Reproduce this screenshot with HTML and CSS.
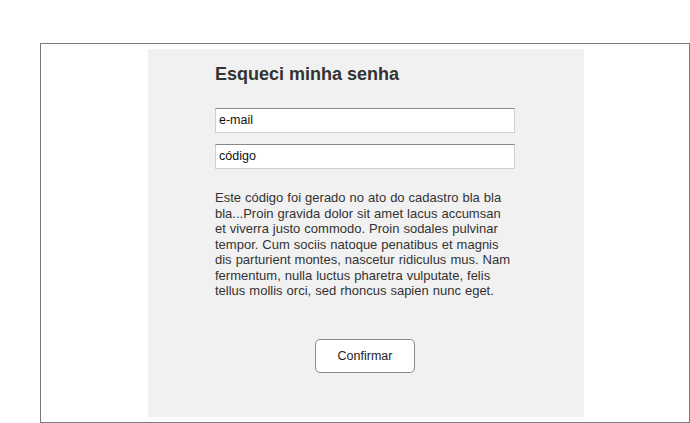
FILE: index.html
```html
<!DOCTYPE html>
<html lang="pt">
<head>
<meta charset="utf-8">
<title>Esqueci minha senha</title>
<link rel="stylesheet" href="styles.css">
</head>
<body>
<div class="frame">
  <main class="panel">
    <div class="content">
      <h1 class="title">Esqueci minha senha</h1>
      <div class="field">e-mail</div>
      <div class="field">código</div>
      <p class="desc">Este código foi gerado no ato do cadastro bla bla bla...Proin gravida dolor sit amet lacus accumsan et viverra justo commodo. Proin sodales pulvinar tempor. Cum sociis natoque penatibus et magnis dis parturient montes, nascetur ridiculus mus. Nam fermentum, nulla luctus pharetra vulputate, felis tellus mollis orci, sed rhoncus sapien nunc eget.</p>
      <div class="actions"><button class="btn" type="button">Confirmar</button></div>
    </div>
  </main>
</div>
</body>
</html>
```
FILE: styles.css
```css
html, body { margin: 0; padding: 0; background: #fff; }
body {
  font-family: "Liberation Sans", Arial, sans-serif;
  color: #333;
  padding: 43px 0 0 40px;
  height: 423px;
  box-sizing: border-box;
  overflow: hidden;
}
.frame {
  width: 650px;
  height: 380px;
  box-sizing: border-box;
  border: 1px solid #7a7a7a;
  padding: 5px 0 0 107px;
}
.panel {
  width: 436px;
  height: 368px;
  background: #f1f1f1;
}
.content {
  padding: 14px 0 0 67px;
  width: 300px;
}
.title {
  margin: 0;
  font-size: 18px;
  font-weight: bold;
  line-height: 22px;
  color: #333;
}
.field {
  margin-top: 0;
  height: 25px;
  box-sizing: border-box;
  background: #fff;
  border: 1px solid #cfcfcf;
  border-top-color: #888;
  font-size: 12.5px;
  line-height: 22px;
  padding-left: 3px;
  color: #111;
}
.title + .field { margin-top: 23px; }
.field + .field { margin-top: 11px; }
.desc {
  margin: 21px 0 0;
  font-size: 13px;
  word-spacing: 0.4px;
  line-height: 15.5px;
  color: #333;
}
.actions {
  display: flex;
  justify-content: center;
  margin-top: 40px;
}
.btn {
  width: 100px;
  height: 34px;
  background: #fff;
  border: 1px solid #8a8a8a;
  border-radius: 5px;
  font-family: "Liberation Sans", Arial, sans-serif;
  font-size: 12.5px;
  color: #222;
  padding: 0;
}
```
